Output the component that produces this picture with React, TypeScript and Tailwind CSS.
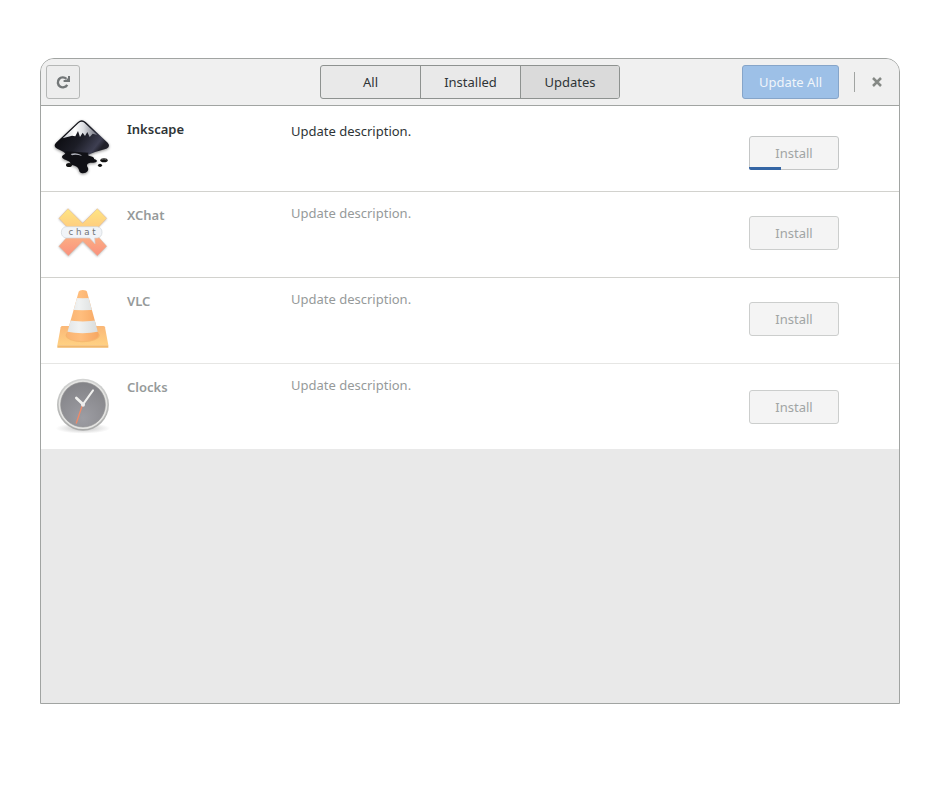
import React from "react";

function InkscapeIcon() {
  return (
    <svg viewBox="0 0 192 192" className="size-16" aria-hidden="true">
      <defs>
        <linearGradient id="ink-body" x1="0" y1="0" x2="1" y2="0.5">
          <stop offset="0.2" stopColor="#0a0a0e" />
          <stop offset="0.6" stopColor="#1c1d26" />
          <stop offset="0.9" stopColor="#3e3f52" />
          <stop offset="1" stopColor="#202029" />
        </linearGradient>
        <linearGradient id="ink-snow" x1="0" y1="0" x2="1" y2="0">
          <stop offset="0" stopColor="#c9ccd3" />
          <stop offset="0.35" stopColor="#fff" />
          <stop offset="0.6" stopColor="#dcdee2" />
          <stop offset="1" stopColor="#6b6d79" />
        </linearGradient>
        <filter id="ink-shadow" x="-20%" y="-20%" width="140%" height="140%">
          <feGaussianBlur stdDeviation="4" />
        </filter>
        <path id="ink-peak" d="M84 24 Q95 14 107 24 L173 86 Q183 97 169 104 Q130 114 112 124 H50 Q46 114 22 104 Q8 97 18 86Z" />
        <path id="ink-drip" d="M46 112 L116 116 Q108 123 122 127 Q134 130 132 135 C146 138 142 147 128 146 C112 145 108 152 113 160 C118 168 112 178 98 178 C85 177 90 168 82 160 C74 152 62 156 61 147 C59 139 37 138 36 129 C36 122 50 122 46 112Z" />
      </defs>
      <g filter="url(#ink-shadow)" opacity="0.45">
        <use href="#ink-peak" y="3" />
        <use href="#ink-drip" y="3" />
      </g>
      <use href="#ink-peak" fill="url(#ink-body)" />
      <use href="#ink-drip" fill="#101015" />
      <path d="M86 27 Q95 20 104 27 L142 63 L128 59 L119 69 L112 54 L105 66 L98 56 L90 69 L84 51 L76 67 L66 65 L52 69 L38 73Z" fill="url(#ink-snow)" />
      <path d="M62 120 Q77 114 92 122 L96 126 Q77 120 66 124Z" fill="#b0b2bb" />
      <ellipse cx="57" cy="153" rx="9" ry="6" fill="#111" />
      <ellipse cx="162" cy="139" rx="11" ry="6" fill="#111" />
      <ellipse cx="150" cy="154" rx="6" ry="5" fill="#111" />
      <path d="M154 137 Q162 132 170 138" stroke="#777" strokeWidth="2" fill="none" />
    </svg>
  );
}

function XChatIcon() {
  return (
    <svg viewBox="18 12 192 192" className="size-16" aria-hidden="true">
      <defs>
        <linearGradient id="xc-fill" x1="0" y1="0" x2="0" y2="1">
          <stop offset="0" stopColor="#fee583" />
          <stop offset="0.35" stopColor="#fed080" />
          <stop offset="0.6" stopColor="#fbae83" />
          <stop offset="1" stopColor="#fa917e" />
        </linearGradient>
        <filter id="xc-shadow" x="-20%" y="-20%" width="140%" height="140%">
          <feGaussianBlur stdDeviation="3" />
        </filter>
      </defs>
      <path d="M72 40 L116 82 L160 40 L188 69 L147 109 L188 152 L160 182 L116 139 L73 182 L44 152 L86 109 L44 69Z" fill="#888" opacity="0.6" filter="url(#xc-shadow)" />
      <path d="M72 38 L116 82 L160 38 L188 67 L150 108 L188 151 L160 179 L116 135 L73 179 L45 151 L83 108 L45 67Z" fill="url(#xc-fill)" stroke="#dfb59a" strokeWidth="1.5" />
      <path d="M66 92 H160 Q174 95 174 109 Q174 123 160 126 H152 L153 143 L137 126 H66 Q52 123 52 109 Q52 95 66 92Z" fill="#f1f4f8" stroke="#cfd4da" strokeWidth="2" />
      <text x="114" y="117" textAnchor="middle" fontFamily="'DejaVu Sans', sans-serif" fontSize="26" fill="#707375">c h a t</text>
    </svg>
  );
}

function VlcIcon() {
  return (
    <svg viewBox="18 12 192 192" className="size-16" aria-hidden="true">
      <defs>
        <linearGradient id="vlc-orange" x1="0" y1="0" x2="1" y2="0">
          <stop offset="0" stopColor="#f8b170" />
          <stop offset="0.45" stopColor="#ffbe7d" />
          <stop offset="1" stopColor="#f5a35e" />
        </linearGradient>
        <linearGradient id="vlc-white" x1="0" y1="0" x2="1" y2="0">
          <stop offset="0" stopColor="#dfe2e3" />
          <stop offset="0.4" stopColor="#f0f2f2" />
          <stop offset="1" stopColor="#d5d8d8" />
        </linearGradient>
        <linearGradient id="vlc-base" x1="0" y1="0" x2="0" y2="1">
          <stop offset="0" stopColor="#fab777" />
          <stop offset="1" stopColor="#ffd183" />
        </linearGradient>
        <clipPath id="vlc-cone">
          <path d="M104 29 Q106 24 116 24 Q127 24 129 29 L164 158 Q163 175 116 177 Q69 175 68 158Z" />
        </clipPath>
      </defs>
      <path d="M55 132 H178 Q182 132 183 136 L193 190 H40 L50 136 Q51 132 55 132Z" fill="url(#vlc-base)" />
      <path d="M40 190 H193 V197 H40Z" fill="#f2b96c" />
      <ellipse cx="116" cy="160" rx="51" ry="21" fill="#e9994f" opacity="0.35" />
      <g clipPath="url(#vlc-cone)">
        <path d="M60 20 H172 V180 H60Z" fill="url(#vlc-orange)" />
        <path d="M60 45 Q116 53 172 45 V81 Q116 88 60 81Z" fill="url(#vlc-white)" />
        <path d="M60 113 Q116 124 172 113 V147 Q116 160 60 147Z" fill="url(#vlc-white)" />
      </g>
    </svg>
  );
}

function ClocksIcon() {
  return (
    <svg viewBox="18 12 192 192" className="size-16" aria-hidden="true">
      <defs>
        <radialGradient id="clk-face" cx="0.5" cy="0.8" r="0.8">
          <stop offset="0" stopColor="#9d9da3" />
          <stop offset="1" stopColor="#838387" />
        </radialGradient>
        <linearGradient id="clk-rim" x1="0" y1="0" x2="0" y2="1">
          <stop offset="0" stopColor="#d4d5d4" />
          <stop offset="1" stopColor="#a9aaa9" />
        </linearGradient>
        <radialGradient id="clk-shadow">
          <stop offset="0.3" stopColor="#aaa" stopOpacity="0.5" />
          <stop offset="1" stopColor="#aaa" stopOpacity="0" />
        </radialGradient>
      </defs>
      <ellipse cx="117" cy="181" rx="82" ry="16" fill="url(#clk-shadow)" />
      <circle cx="117" cy="110" r="78" fill="url(#clk-rim)" />
      <circle cx="117" cy="110" r="73" fill="#e4e4e2" />
      <circle cx="117" cy="110" r="67" fill="url(#clk-face)" stroke="#919193" strokeWidth="2" />
      <g strokeLinecap="round">
        <path d="M116 109 L97 165" stroke="#f08a68" strokeWidth="4" />
        <path d="M117 109 L147 67" stroke="#f0f0ee" strokeWidth="6" />
        <path d="M117 109 L97 90" stroke="#f0f0ee" strokeWidth="8" />
      </g>
      <circle cx="117" cy="110" r="6" fill="#eee" />
    </svg>
  );
}

type Update = {
  name: string;
  Icon: () => React.JSX.Element;
  row: string;
  text: string;
  button: string;
  progress?: number;
};

const updates: Update[] = [
  { name: "Inkscape", Icon: InkscapeIcon, row: "border-b border-[#d2d2ce] text-[#2e3436]", text: "mt-4", button: "mt-[30px] border-[#c4c6c6]", progress: 36 },
  { name: "XChat", Icon: XChatIcon, row: "border-b border-[#d2d2ce] text-[#969a9a]", text: "mt-3", button: "mt-6 border-[#cccecd]" },
  { name: "VLC", Icon: VlcIcon, row: "border-b border-[#e6e6e4] text-[#969a9a]", text: "mt-3", button: "mt-6 border-[#cccecd]" },
  { name: "Clocks", Icon: ClocksIcon, row: "text-[#969a9a]", text: "mt-3", button: "mt-[26px] border-[#cccecd]" },
];

function UpdateRow({ name, Icon, row, text, button, progress }: Update) {
  return (
    <li className={`flex items-start bg-white pr-[60px] pl-[9px] ${row}`}>
      <div className="mt-2 mb-[13px] shrink-0">
        <Icon />
      </div>
      <h2 className="mt-[14px] ml-[13px] w-[164px] shrink-0 font-semibold">{name}</h2>
      <p className={`min-w-0 flex-1 ${text}`}>Update description.</p>
      <button
        type="button"
        disabled
        aria-label={`Install ${name}`}
        className={`relative h-[34px] w-[90px] shrink-0 rounded-[3px] border bg-[#f4f4f4] text-[#a1a5a4] ${button}`}
      >
        Install
        {progress !== undefined && (
          <span className="absolute -bottom-px -left-px h-[3px] rounded-bl-[2px] bg-[#3465a4]" style={{ width: `${progress}%` }} />
        )}
      </button>
    </li>
  );
}

export default function App() {
  return (
    <div className="flex min-h-screen flex-col bg-white px-10 pt-[58px] pb-24 font-['Noto_Sans','Open_Sans',sans-serif] text-[13px] leading-[18px]">
      <main className="flex flex-1 flex-col overflow-hidden rounded-t-[14px] border border-[#a1a4a2] bg-[#e9e9e9]">
        <header className="grid grid-cols-[1fr_auto_1fr] items-center border-b border-[#a1a4a2] bg-[#f0f0f0] px-[5px] py-1.5 text-[#2e3436]">
          <button type="button" aria-label="Refresh" className="flex size-[34px] items-center justify-center rounded-[3px] border border-[#b5b7b6] bg-[#ededed]">
            <svg viewBox="0 0 16 16" className="size-4" aria-hidden="true">
              <path d="M11.4 4.8 A5 5 0 1 0 12.2 10.8" fill="none" stroke="#737778" strokeWidth="2.4" />
              <path d="M15 2 V8 H8.6 V6 H11 L13 4 V2Z" fill="#737778" />
            </svg>
          </button>
          <nav className="flex h-[34px] overflow-hidden rounded-[3px] border border-[#8e9290] bg-[#e9e9e9]">
            <button type="button" className="w-[100px] border-r border-[#8e9290]">All</button>
            <button type="button" className="w-[100px] border-r border-[#8e9290]">Installed</button>
            <button type="button" aria-pressed="true" className="w-[98px] bg-[#dadada]">Updates</button>
          </nav>
          <div className="flex items-center justify-end">
            <button type="button" className="h-[34px] w-[97px] rounded-[3px] border border-[#86a5c9] bg-[#9dc0e7] text-[#f0f5fa]">Update All</button>
            <span className="ml-[15px] h-5 w-px bg-[#a1a4a2]" />
            <button type="button" aria-label="Close" className="mr-[9px] ml-3.5 flex size-4 items-center justify-center">
              <svg viewBox="0 0 16 16" className="size-4" aria-hidden="true">
                <path d="M4 4 L12 12 M12 4 L4 12" stroke="#858985" strokeWidth="2.5" />
              </svg>
            </button>
          </div>
        </header>
        <ul>
          {updates.map((u) => (
            <UpdateRow key={u.name} {...u} />
          ))}
        </ul>
      </main>
    </div>
  );
}
